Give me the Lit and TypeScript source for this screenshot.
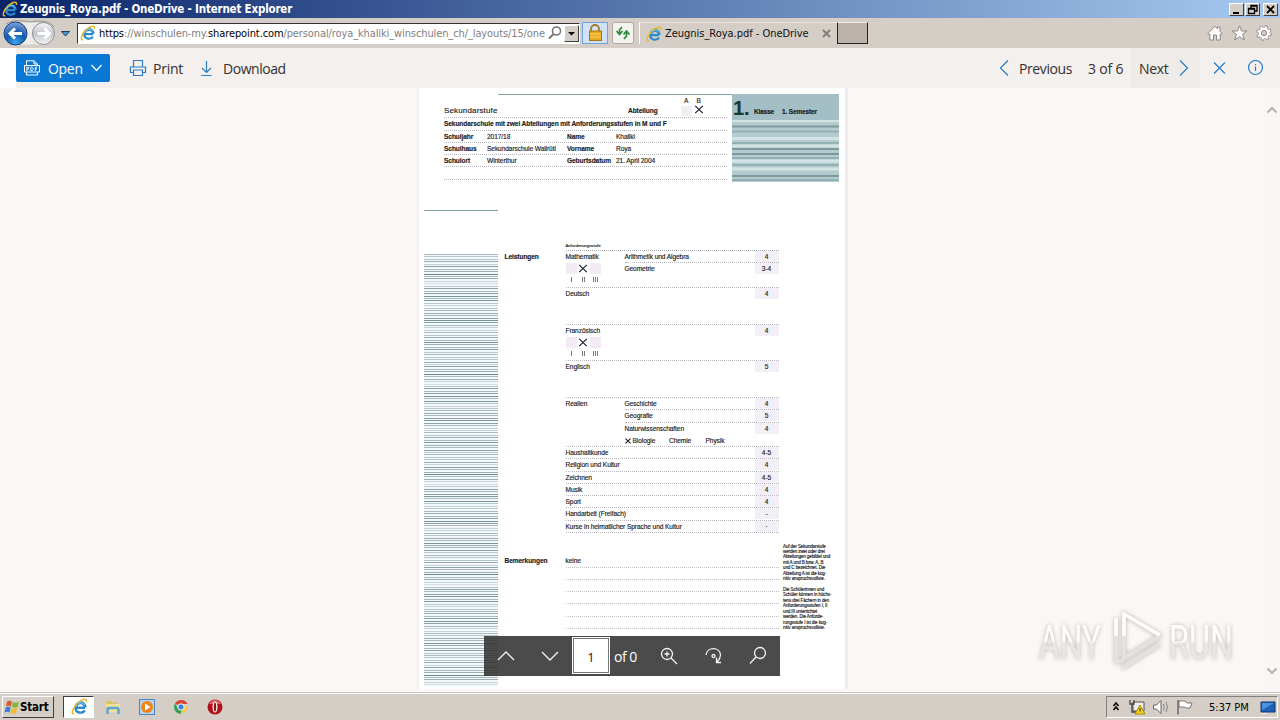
import { LitElement, html, css, svg, nothing } from 'lit';
import { customElement, property } from 'lit/decorators.js';

interface GradeRow {
  topic?: string;
  grade?: string;
  line?: 'part';
  marks?: string[];
}

interface Subject {
  name: string;
  rows: GradeRow[];
  levels?: boolean;
}

const SUBJECTS: Subject[] = [
  {
    name: 'Mathematik',
    levels: true,
    rows: [
      { topic: 'Arithmetik und Algebra', grade: '4', line: 'part' },
      { topic: 'Geometrie', grade: '3-4' },
      {},
    ],
  },
  { name: 'Deutsch', rows: [{ grade: '4' }, {}, {}] },
  { name: 'Französisch', levels: true, rows: [{ grade: '4' }, {}, {}] },
  { name: 'Englisch', rows: [{ grade: '5' }, {}, {}] },
  {
    name: 'Realien',
    rows: [
      { topic: 'Geschichte', grade: '4', line: 'part' },
      { topic: 'Geografie', grade: '5', line: 'part' },
      { topic: 'Naturwissenschaften', grade: '4' },
      { marks: ['Biologie', 'Chemie', 'Physik'] },
    ],
  },
  { name: 'Haushaltkunde', rows: [{ grade: '4-5' }] },
  { name: 'Religion und Kultur', rows: [{ grade: '4' }] },
  { name: 'Zeichnen', rows: [{ grade: '4-5' }] },
  { name: 'Musik', rows: [{ grade: '4' }] },
  { name: 'Sport', rows: [{ grade: '4' }] },
  { name: 'Handarbeit (Freifach)', rows: [{ grade: '-' }] },
  { name: 'Kurse in heimatlicher Sprache und Kultur', rows: [{ grade: '·' }] },
];

const NOTES = [
  'Auf der Sekundarstufe',
  'werden zwei oder drei',
  'Abteilungen gebildet und',
  'mit A und B bzw. A, B',
  'und C bezeichnet. Die',
  'Abteilung A ist die kog-',
  'nitiv anspruchsvollste.',
  '',
  'Die Schülerinnen und',
  'Schüler können in höchs-',
  'tens drei Fächern in den',
  'Anforderungsstufen I, II',
  'und III unterrichtet',
  'werden. Die Anforde-',
  'rungsstufe I ist die kog-',
  'nitiv anspruchsvollste.',
];

// stripe strength repeats irregularly down the margin
const STRIPES = [5, 4, 4, 6, 3, 7, 5, 6, 9, 5, 6, 3, 2, 4, 7, 5, 7, 8, 5, 8, 4, 3, 4, 5, 6, 5, 7, 8, 7, 5, 3, 3, 5, 4, 6, 5, 8, 6, 5, 7, 4];

const cross = html`<svg class="cross" viewBox="0 0 10 10"><path d="M.8 1 9.2 9M9.2 1 .8 9" /></svg>`;

@customElement('ie-logo')
class IeLogo extends LitElement {
  @property({ type: Number }) size = 16;

  static styles = css`
    :host { display: block; flex: none; }
    svg { display: block; }
  `;

  render() {
    return html`
      <svg width=${this.size} height=${this.size} viewBox="0 0 16 16" fill="none">
        <path d="M13.200 9.200H5M5 9.200C4.800 3.600 12.800 3.500 12.800 8.500M12.900 11.600c-1.800 3.200-8.400 3-8.700-2.100C3.900 3 13.200 2 13.600 8.800" stroke="#2a8bcd" stroke-width="2.200" />
        <path d="M4.600 8C5.200 4.200 11 3 12.800 6.500" stroke="#7fd0f2" stroke-width="1" />
        <path d="M3.200 14.600C-.6 15.800 1.400 9 6.500 4.500 10.500.8 15.800-.4 14.300 4" stroke="#e9b92c" stroke-width="1.400" />
      </svg>
    `;
  }
}

@customElement('school-report')
class SchoolReport extends LitElement {
  static styles = css`
    :host {
      display: block;
      width: 426px;
      height: 601px;
      background: #fff;
      color: #1c1c24;
      font: 6.600px/12.25px 'Liberation Sans', Arial, sans-serif;
      letter-spacing: -0.09px;
      -webkit-text-stroke: 0.15px #1c1c24;
      box-sizing: border-box;
      padding: 6px 0 0 5px;
      white-space: nowrap;
    }
    b { font-weight: 700; }
    .top { display: flex; height: 88px; }
    .head { width: 283px; margin-left: 20px; margin-right: 5px; }
    .rule { height: 1px; background: #7fa3a3; margin-left: 54px; margin-right: -5px; }
    .title { display: flex; height: 23.250px; align-items: flex-end; box-sizing: border-box; border-bottom: 1px dotted #b5b5bb; }
    .title .stufe { width: 184px; font-size: 8px; letter-spacing: 0.15px; line-height: 13px; }
    .title b { width: 53px; }
    .ab { display: flex; gap: 2px; align-self: flex-start; text-align: center; line-height: 8px; margin-top: 2px; }
    .ab div { width: 10.500px; }
    .box { height: 10px; background: #f1eef3; margin-top: 1px; }
    .cross { width: 10px; height: 9px; display: block; fill: none; stroke: #1c1c30; stroke-width: 1.300; margin: 0 auto; }
    .info { display: grid; grid-template-columns: 43px 80px 49px 1fr; height: 12.250px; box-sizing: border-box; border-bottom: 1px dotted #b5b5bb; }
    .info.wide { display: block; letter-spacing: -0.1px; }
    .klasse { width: 107px; background: #a3bfc5; }
    .klasse .label { display: flex; height: 26px; align-items: flex-end; padding-left: 1px; box-sizing: border-box; }
    .klasse .one { font-size: 20px; line-height: 24px; width: 21px; color: #173c35; letter-spacing: 0; }
    .klasse .txt { line-height: 16px; font-size: 6.400px; width: 28px; -webkit-text-stroke-width: 0.2px; }
    .bands { display: block; width: 107px; height: 62px; }
    .short { width: 74px; height: 1px; background: #7fa3a3; margin-top: 28px; }
    .main { display: grid; grid-template-columns: 74px 6.500px 61px 213px 4.500px 1fr; margin-top: 30px; }
    .stripes { width: 74px; height: 433px; margin-top: 13px; display: block; }
    .caption { display: flex; flex-direction: column; }
    .caption b { margin-top: 10px; }
    .caption b + b { margin-top: 291.500px; }
    .tiny { font-size: 4.300px; line-height: 9px; height: 9px; letter-spacing: 0; }
    .table { border-top: 1px dotted #aaaab2; }
    .subject { display: grid; grid-template-columns: 59px 1fr; border-bottom: 1px dotted #b5b5bb; }
    .subject > div { margin-bottom: -1px; }
    .name { width: 0; }
    .row { display: grid; grid-template-columns: 1fr 24px; height: 12.250px; box-sizing: border-box; }
    .row.part { border-bottom: 1px dotted #b5b5bb; }
    .grade { background: #f3eff7; text-align: center; height: 11px; }
    .levels { display: grid; grid-template-columns: repeat(3, 12px); width: 36px; text-align: center; line-height: 10px; letter-spacing: 0; -webkit-text-stroke-width: 0; opacity: 0.990; }
    .levels .lbox { background: #f3eaf5; height: 11px; margin: 0 1px 1px 0; padding-top: 1px; box-sizing: border-box; }
    .levels .lbox.on { background: #fff; }
    .marks { display: flex; }
    .marks span { width: 36.500px; }
    .marks svg { width: 6px; height: 6px; margin: 3px 2px 0 0; stroke-width: 1.800; }
    .remarks { margin-top: 22.500px; }
    .remarks div { height: 12.250px; box-sizing: border-box; border-bottom: 1px dotted #c0c0c6; }
    .notes { font-size: 4.500px; line-height: 5.450px; margin-top: 302.500px; letter-spacing: -0.1px; }
    .notes div { height: 5.450px; }
  `;

  renderRow(row: GradeRow) {
    if (row.marks) {
      return html`<div class="row"><div class="marks">${cross}${row.marks.map((m) => html`<span>${m}</span>`)}</div></div>`;
    }
    return html`
      <div class="row ${row.line ?? ''}">
        <span>${row.topic}</span>
        ${row.grade ? html`<span class="grade">${row.grade}</span>` : nothing}
      </div>
    `;
  }

  renderLevels() {
    return html`
      <div class="levels">
        <div class="lbox"></div><div class="lbox on">${cross}</div><div class="lbox"></div>
        <span>I</span><span>II</span><span>III</span>
      </div>
    `;
  }

  render() {
    return html`
      <div class="top">
        <div class="head">
          <div class="rule"></div>
          <div class="title">
            <span class="stufe">Sekundarstufe</span><b>Abteilung</b>
            <div class="ab">
              <div>A<div class="box"></div></div>
              <div>B<div>${cross}</div></div>
            </div>
          </div>
          <div class="info wide"><b>Sekundarschule mit zwei Abteilungen mit Anforderungsstufen in M und F</b></div>
          <div class="info"><b>Schuljahr</b><span>2017/18</span><b>Name</b><span>Khaliki</span></div>
          <div class="info"><b>Schulhaus</b><span>Sekundarschule Wallrüti</span><b>Vorname</b><span>Roya</span></div>
          <div class="info"><b>Schulort</b><span>Winterthur</span><b>Geburtsdatum</b><span>21. April 2004</span></div>
          <div class="info"></div>
        </div>
        <div class="klasse">
          <div class="label"><b class="one">1.</b><b class="txt">Klasse</b><b class="txt">1. Semester</b></div>
          <svg class="bands" viewBox="0 0 107 62" preserveAspectRatio="none">
            <rect width="107" height="62" fill="#b4cccf" />
            <path d="M0 .5H107M0 18.500H107M0 26H107M0 41H107M0 49H107" stroke="#d3e3e3" stroke-width="3" />
            <path d="M0 11.500H107M0 23H107M0 38H107M0 45H107M0 60H107" stroke="#93b0b2" stroke-width="2" />
            <path d="M0 6.500H107M0 29H107M0 34H107M0 56H107" stroke="#7a9a9b" stroke-width="2" />
          </svg>
        </div>
      </div>
      <div class="short"></div>
      <div class="main">
        <svg class="stripes" viewBox="0 0 74 433">
          <rect width="74" height="433" fill="#f3f8fa" />
          ${Array.from({ length: 177 }, (_, i) => svg`
            <rect y=${Math.round(i * 2.445)} width="74" height="1" fill="#4f7078" opacity=${STRIPES[i % STRIPES.length] / 11} />
          `)}
        </svg>
        <div></div>
        <div class="caption"><b>Leistungen</b><b>Bemerkungen</b></div>
        <div>
          <div class="tiny">Anforderungsstufe</div>
          <div class="table">
            ${SUBJECTS.map((s) => html`
              <div class="subject">
                <div class="name">${s.name}${s.levels ? this.renderLevels() : nothing}</div>
                <div>${s.rows.map((r) => this.renderRow(r))}</div>
              </div>
            `)}
          </div>
          <div class="remarks"><div>keine</div><div></div><div></div><div></div><div></div><div></div></div>
        </div>
        <div></div>
        <div class="notes">${NOTES.map((n) => html`<div>${n}</div>`)}</div>
      </div>
    `;
  }
}

@customElement('app-root')
class AppRoot extends LitElement {
  static styles = css`
    :host {
      display: flex;
      flex-direction: column;
      width: 1280px;
      height: 720px;
      overflow: hidden;
      position: relative;
      background: #d4cec7;
      font-family: 'DejaVu Sans Condensed', 'DejaVu Sans', sans-serif;
      white-space: nowrap;
    }
    svg { display: block; flex: none; fill: none; }
    .titlebar {
      display: flex;
      align-items: center;
      height: 18px;
      box-sizing: border-box;
      padding: 0 2px;
      background: linear-gradient(90deg, #0a246a, #a6caf0);
      color: #fff;
      font-size: 11.500px;
      font-weight: 700;
    }
    .titlebar .name { margin-left: 2px; flex: 1; letter-spacing: -0.19px; }
    .win { width: 15px; height: 13px; box-sizing: border-box; background: #d4cec7; border: 1px solid; border-color: #fff #404040 #404040 #fff; margin-left: 1px; }
    .win.close { margin-left: 3px; }
    .nav { display: flex; align-items: center; height: 30px; }
    .address { display: flex; align-items: center; width: 503px; height: 21px; box-sizing: border-box; margin-left: 5px; background: #fff; border: 1px solid #444; border-color: #33303c #fff #fff #33303c; padding-left: 2px; font-size: 11px; color: #808080; }
    .url { width: 448px; margin-left: 3px; overflow: hidden; letter-spacing: -0.11px; }
    .url i { font-style: normal; color: #000; }
    .drop { width: 15px; height: 17px; box-sizing: border-box; background: #d4cec7; border: 1px solid; border-color: #fff #404040 #404040 #fff; margin-left: auto; }
    .lock { width: 26px; height: 22px; box-sizing: border-box; border: 1px solid #6fa4dd; background: #cfe2f8; margin-left: 2px; }
    .reload { width: 22px; height: 22px; box-sizing: border-box; border: 1px solid #b0aaa6; background: #f2f2ef; margin-left: 4px; border-radius: 2px; }
    .tab { display: flex; align-items: center; width: 198px; height: 22px; box-sizing: border-box; border-left: 1px solid #fff; border-top: 1px solid #e8e4de; margin-left: 5px; padding-left: 6px; font-size: 11px; color: #111; }
    .tab .name { width: 157px; margin-left: 3px; letter-spacing: -0.03px; }
    .newtab { width: 31px; height: 22px; box-sizing: border-box; background: #bab2ab; border: 1px solid #222; border-top-color: #eee; }
    .tools { display: flex; gap: 8px; margin-left: auto; margin-right: 8px; }
    .commands { display: flex; align-items: center; height: 40px; background: #f3f0ee; color: #323130; font: 14px 'Open Sans', 'Noto Sans', sans-serif; }
    .gap { width: 16px; height: 40px; background: #fff; }
    .open { display: flex; align-items: center; width: 94px; height: 28px; box-sizing: border-box; background: #0878d4; color: #fff; border-radius: 2px; padding-left: 8px; margin-right: 19px; }
    .open span { width: 42px; margin-left: 8px; letter-spacing: -0.3px; }
    .print { width: 46px; margin-left: 6px; letter-spacing: -0.25px; }
    .download { margin-left: 9px; letter-spacing: -0.45px; flex: 1; }
    .previous { margin-left: 10px; width: 69px; letter-spacing: -0.4px; }
    .count { width: 43px; letter-spacing: -0.2px; }
    .next { display: flex; align-items: center; height: 40px; width: 69px; box-sizing: border-box; padding-left: 8px; background: #eeebe9; }
    .next span { width: 40px; letter-spacing: -0.3px; }
    .viewer { display: flex; height: 604px; background: #faf7f4; }
    .sheet { width: 426px; height: 601px; margin-left: 417px; border-left: 2px solid #f1efef; border-right: 3px solid #eeecec; }
    .scroll { display: flex; flex-direction: column; justify-content: space-between; align-items: center; width: 16px; margin-left: auto; padding: 18px 0 17px; box-sizing: border-box; background: #f8f7f6; }
    .pager { position: absolute; left: 484px; top: 636px; width: 296px; height: 40px; display: flex; align-items: center; background: rgba(50, 50, 50, 0.880); color: #fff; font: 14px 'Open Sans', sans-serif; }
    .pager svg { stroke: #f4f4f4; stroke-width: 1.300; }
    .pager .num { width: 38px; height: 37px; box-sizing: border-box; border: 1px solid #fff; outline: 1px solid #777; outline-offset: -2px; background: #fff; color: #222; text-align: center; line-height: 39px; margin: -1px 4px 0 12px; font-size: 13px; }
    .pager .of { width: 46px; letter-spacing: -0.5px; }
    .watermark { position: absolute; left: 1030px; top: 600px; overflow: visible; filter: drop-shadow(0 0 2px rgba(70, 70, 70, 0.450)); opacity: 0.800; }
    .watermark text { font: 48px Roboto, sans-serif; fill: url(#fade); }
    .taskbar { display: flex; align-items: center; height: 28px; box-sizing: border-box; border-top: 1px solid #c9c6c0; box-shadow: inset 0 1px #fff; padding: 1px 2px 0; }
    .start { display: flex; align-items: center; width: 52px; height: 22px; box-sizing: border-box; border: 1px solid; border-color: #fff #404040 #404040 #fff; font-size: 11.500px; font-weight: 700; letter-spacing: -0.200px; padding-left: 1px; }
    .active { width: 31px; height: 22px; box-sizing: border-box; background: #fff; border: 1px solid; border-color: #404040 #fff #fff #404040; margin-left: 9px; padding: 1px 0 0 7px; }
    .apps { display: flex; gap: 18px; margin-left: 11px; flex: 1; }
    .tray { display: flex; align-items: center; width: 172px; height: 22px; box-sizing: border-box; border: 1px solid; border-color: #808080 #fff #fff #808080; font-size: 11px; color: #000; padding-left: 5px; }
    .clock { width: 51px; margin-left: 15px; letter-spacing: 0; }
  `;

  renderTitlebar() {
    return html`
      <div class="titlebar">
        <ie-logo></ie-logo>
        <span class="name">Zeugnis_Roya.pdf - OneDrive - Internet Explorer</span>
        <div class="win"><svg width="13" height="11"><path d="M3 9H9" stroke="#000" stroke-width="2" /></svg></div>
        <div class="win"><svg width="13" height="11"><path d="M5 5V1.500H11V7H8.500M5 2H11" stroke="#000" stroke-width="1.300" /><path d="M2.500 4.500H8.500V9.500H2.500ZM2.500 5H8.500" stroke="#000" stroke-width="1.300" /></svg></div>
        <div class="win close"><svg width="13" height="11"><path d="M3 2 10 9M10 2 3 9" stroke="#000" stroke-width="1.800" /></svg></div>
      </div>
    `;
  }

  renderNav() {
    return html`
      <div class="nav">
        <svg width="72" height="30" viewBox="0 18 72 30">
          <defs>
            <radialGradient id="blue" cx=".5" cy=".9" r=".9"><stop stop-color="#3aa7ec" /><stop offset=".5" stop-color="#1357ae" /><stop offset="1" stop-color="#7fa5d8" /></radialGradient>
            <linearGradient id="grey" x2="0" y2="1"><stop stop-color="#f7f8fa" /><stop offset=".5" stop-color="#c3c6cc" /><stop offset="1" stop-color="#f2f4f6" /></linearGradient>
          </defs>
          <path d="M6 24C12 20 20 20 30 22C40 20 50 21 54 27" stroke="#98938f" />
          <rect x="4" y="22.500" width="51" height="22" rx="11" fill="#edebe8" />
          <circle cx="15.500" cy="33.500" r="11.500" fill="url(#blue)" stroke="#1d3f7a" />
          <path d="M22 33.500H10.500M15 28.500 10 33.500 15 38.500" stroke="#fff" stroke-width="3" />
          <circle cx="43.500" cy="33.500" r="11" fill="url(#grey)" stroke="#898e95" />
          <path d="M37.500 33.500H49M44.500 28.500 49.500 33.500 44.500 38.500" stroke="#fff" stroke-width="3" />
          <path d="M61.500 31.500H69.500L65.500 36Z" fill="#4f9ad0" stroke="#1d3d5c" />
        </svg>
        <div class="address">
          <ie-logo></ie-logo>
          <span class="url"><i>https</i>://winschulen-my.<i>sharepoint.com</i>/personal/roya_khaliki_winschulen_ch/_layouts/15/one</span>
          <svg width="16" height="16" viewBox="0 0 16 16"><circle cx="9.500" cy="6" r="4" stroke="#777" stroke-width="1.600" /><path d="M6.500 9 2 13.500" stroke="#777" stroke-width="2" /></svg>
          <div class="drop"><svg width="13" height="15"><path d="M3 6H10L6.500 9.500Z" fill="#000" /></svg></div>
        </div>
        <div class="lock">
          <svg width="24" height="20" viewBox="0 0 24 20">
            <path d="M8 9V6A4 4 0 0 1 16 6V9" stroke="#a37a24" stroke-width="1.800" />
            <rect x="6.500" y="8" width="12" height="9.500" fill="#e9a81e" stroke="#a8740e" />
            <path d="M7 11H18M7 14H18" stroke="#f8d568" />
          </svg>
        </div>
        <div class="reload">
          <svg width="20" height="20" viewBox="0 0 20 20">
            <path d="M9 4 6.500 7V10.500M3.500 8 6.500 11.500 9.500 8M11 16 13.500 13V9.500M10.500 11.500 13.500 8 16.500 11.500" stroke="#2d8c3c" stroke-width="1.700" />
          </svg>
        </div>
        <div class="tab">
          <ie-logo></ie-logo>
          <span class="name">Zeugnis_Roya.pdf - OneDrive</span>
          <svg width="9" height="9"><path d="M1 1 8 8M8 1 1 8" stroke="#807b76" stroke-width="1.800" /></svg>
        </div>
        <div class="newtab"></div>
        <div class="tools">
          <svg width="16" height="16" viewBox="0 0 16 16"><path d="M.8 8.500 8 1.200 10.500 3.800V2H13V6.200L15.200 8.500 14 9.600 13.200 8.800V15H9.500V10H6.500V15H2.800V8.800L2 9.600Z" fill="#fff" stroke="#8c8782" /></svg>
          <svg width="17" height="16" viewBox="0 0 17 16"><path d="M8.500.8 10.500 6H16L11.600 9.300 13.300 15 8.500 11.600 3.700 15 5.400 9.300 1 6H6.500Z" fill="#fff" stroke="#8c8782" /></svg>
          <svg width="16" height="16" viewBox="0 0 16 16">
            <circle cx="8" cy="8" r="6.300" stroke="#8c8782" stroke-width="3" stroke-dasharray="2.700 2.248" />
            <circle cx="8" cy="8" r="5.300" stroke="#8c8782" stroke-width="1.600" />
            <circle cx="8" cy="8" r="5.800" stroke="#fff" stroke-width="2.200" stroke-dasharray="1.900 2.655" stroke-dashoffset="-.3" />
            <circle cx="8" cy="8" r="4.200" stroke="#fff" stroke-width="2.400" />
            <circle cx="8" cy="8" r="2.600" stroke="#8c8782" />
          </svg>
        </div>
      </div>
    `;
  }

  renderCommands() {
    return html`
      <div class="commands">
        <div class="gap"></div>
        <div class="open">
          <svg width="16" height="16" viewBox="0 0 16 16" stroke="#fff">
            <path d="M2.500 5.500V.8H10L13.500 4V5.500M10 .8V4H13.500M2.500 12V15H13.500V12M.5 5.500H15.500V12H.5Z" />
            <path d="M2.800 11V7.200H4.600V9.200H3M6.800 7.200H8.300L9 8V9.800L8.300 10.500H6.800ZM11.300 11V7.200H13.300M11.300 9H13" stroke-width=".9" />
          </svg>
          <span>Open</span>
          <svg width="13" height="8"><path d="M1.500 1 6.500 6.500 11.500 1" stroke="#fff" stroke-width="1.200" /></svg>
        </div>
        <svg width="18" height="18" viewBox="0 0 18 18" stroke="#2b7cc4" stroke-width="1.200">
          <path d="M4.500 8V1.500H13.500V8M4.500 13.500H1.500V8H16.500V13.500H13.500M4.500 11H13.500V16.500H4.500Z" />
        </svg>
        <span class="print">Print</span>
        <svg width="15" height="17" viewBox="0 0 15 17" stroke="#2b7cc4" stroke-width="1.200"><path d="M7.500 1V12M3 8 7.500 12.500 12 8M2.500 15.500H12.500" /></svg>
        <span class="download">Download</span>
        <svg width="10" height="16" stroke="#2b7cc4" stroke-width="1.200"><path d="M9 .5 1.500 8 9 15.500" /></svg>
        <span class="previous">Previous</span>
        <span class="count">3 of 6</span>
        <div class="next">
          <span>Next</span>
          <svg width="10" height="16" stroke="#2b7cc4" stroke-width="1.200"><path d="M1 .5 8.500 8 1 15.500" /></svg>
        </div>
        <svg width="80" height="16" stroke="#2b7cc4" stroke-width="1.200">
          <path d="M14 2.500 25 13.500M25 2.500 14 13.500" />
          <circle cx="55.500" cy="7.500" r="7" />
          <path d="M55.500 6.500V11M55.500 4V5.200" />
        </svg>
      </div>
    `;
  }

  renderPager() {
    return html`
      <div class="pager">
        <svg width="76" height="20"><path d="M14 14 22 6 30 14M58 6 66 14 74 6" /></svg>
        <div class="num">1</div>
        <span class="of">of 0</span>
        <svg width="116" height="20" viewBox="0 0 116 20">
          <circle cx="7" cy="8" r="5.500" /><path d="M11 12 17 18M4.500 8H9.500M7 5.500V10.500" />
          <path d="M46 9C47 .5 60 .5 60.500 9C60.500 12 59 14 57 16M56.500 11.500V16.500H61" /><circle cx="53.500" cy="10" r="1.500" />
          <circle cx="100" cy="7" r="5.500" /><path d="M96 11 90 17.500" />
        </svg>
      </div>
    `;
  }

  renderWatermark() {
    return html`
      <svg class="watermark" width="240" height="90" viewBox="0 0 240 90">
        <defs>
          <linearGradient id="fade" gradientUnits="userSpaceOnUse" x1="0" y1="24" x2="0" y2="60"><stop offset=".45" stop-color="#fff" /><stop offset=".55" stop-color="#e6e3e1" /></linearGradient>
        </defs>
        <text x="9" y="59" textLength="62" lengthAdjust="spacingAndGlyphs">ANY</text>
        <text x="139" y="59" textLength="64" lengthAdjust="spacingAndGlyphs">RUN</text>
        <g stroke-linejoin="round" stroke="#dfdddb" stroke-width="4">
          <path d="M94 50V14L130 36L94 58Z" />
          <path d="M86 18V62L94 60M92 68 130 44" />
        </g>
        <path d="M94 36V14L130 35M86 36V18" stroke="#fff" stroke-width="3.500" />
      </svg>
    `;
  }

  renderTaskbar() {
    return html`
      <div class="taskbar">
        <div class="start">
          <svg width="16" height="16" viewBox="0 0 16 16">
            <path d="M3 2.500Q5.500 1 8 2.500L7 7.500Q4.500 6 2 7.500Z" fill="#e2592b" />
            <path d="M9 3Q11.500 4.500 15 3L13.500 8Q11 9.500 8 8Z" fill="#78b83a" />
            <path d="M1.800 8.500Q4.300 7 6.800 8.500L5.500 13.500Q3 12 .5 13.500Z" fill="#3b7fd0" />
            <path d="M7.800 9Q10.500 10.500 13.300 9L12 14Q9.500 15.500 6.500 14Z" fill="#f3bb30" />
          </svg>
          <span>Start</span>
        </div>
        <div class="active"><ie-logo size="17"></ie-logo></div>
        <div class="apps">
          <svg width="16" height="16" viewBox="0 0 16 16">
            <path d="M1 2H6L7 3.500H13V6H1Z" fill="#d9c268" /><rect x="1" y="5" width="14" height="8" fill="#f1df94" />
            <path d="M2.500 15V10.500Q2.500 9 4 9H12Q13.500 9 13.500 10.500V15" stroke="#5ba4d4" stroke-width="2.500" />
          </svg>
          <svg width="16" height="16" viewBox="0 0 16 16">
            <rect x=".5" y=".5" width="15" height="15" fill="#b7d5f2" stroke="#4b86c6" /><circle cx="8" cy="8" r="6" fill="#f08418" /><path d="M6 4.500 11.500 8 6 11.500Z" fill="#fff" />
          </svg>
          <svg width="16" height="16" viewBox="0 0 16 16">
            <path d="M8 8 2 4.500A7 7 0 0 1 14.500 5H8Z" fill="#dc4334" /><path d="M8 8H14.900A7 7 0 0 1 8 15L11 9.500Z" fill="#f8cd3a" transform="translate(0 -1)" />
            <path d="M2 4.500 5.500 10 9 11 7.500 15A7 7 0 0 1 2 4.500" fill="#35a055" /><circle cx="8" cy="8" r="3.200" fill="#3c7de0" stroke="#fff" />
          </svg>
          <svg width="16" height="16" viewBox="0 0 16 16"><circle cx="8" cy="8" r="7.500" fill="#b01116" /><path d="M2 5Q8-3 14 5" fill="#de6b66" /><ellipse cx="8" cy="8" rx="2.500" ry="5.500" fill="#fff" /><ellipse cx="8" cy="8" rx="1.200" ry="4.500" fill="#a00d12" /></svg>
        </div>
        <div class="tray">
          <svg width="82" height="18" viewBox="0 0 82 18">
            <path d="M1.500 8 4 5 6.500 8M1.500 12 4 9 6.500 12" stroke="#000" stroke-width="1.500" />
            <path d="M21 4H32V13H21Z" fill="#eee" stroke="#555" /><path d="M18 2V6H22V2M20 6V14H25" stroke="#444" stroke-width="1.300" />
            <path d="M28 7 33 16H23Z" fill="#f5d51c" stroke="#a88d08" /><path d="M28 10V13.500" stroke="#222" />
            <path d="M41.500 7H44.500L49 2.500V15.500L44.500 11H41.500Z" fill="#fff" stroke="#666" /><path d="M51.500 6Q53 9 51.500 12M54 4Q57 9 54 14" stroke="#888" />
            <path d="M66 2V16.500" stroke="#666" stroke-width="1.500" /><path d="M67 3H73L75 5H80L78 10H74L72 9H67Z" fill="#fff" stroke="#777" />
          </svg>
          <span class="clock">5:37 PM</span>
          <svg width="16" height="15"><path d="M1 2H15V12H1Z" fill="#1f60bb" stroke="#0f3777" /><path d="M2 3H14L2 10Z" fill="#4a93e0" /><path d="M1 13.500H7" stroke="#eee" /></svg>
        </div>
      </div>
    `;
  }

  render() {
    return html`
      ${this.renderTitlebar()}
      ${this.renderNav()}
      ${this.renderCommands()}
      <div class="viewer">
        <div class="sheet"><school-report></school-report></div>
        <div class="scroll">
          <svg width="12" height="8"><path d="M1.500 6.500 6 2 10.500 6.500" stroke="#b5b3b1" stroke-width="2" /></svg>
          <svg width="12" height="8"><path d="M1.500 1.500 6 6 10.500 1.500" stroke="#b5b3b1" stroke-width="2" /></svg>
        </div>
      </div>
      ${this.renderTaskbar()}
      ${this.renderPager()}
      ${this.renderWatermark()}
    `;
  }
}
